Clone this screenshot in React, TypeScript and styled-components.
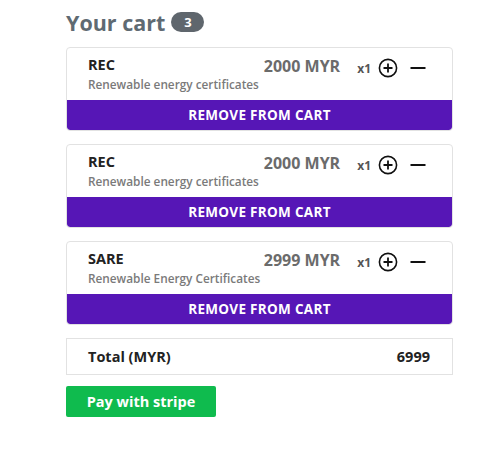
import styled, { createGlobalStyle } from 'styled-components';

const GlobalStyle = createGlobalStyle`
  body {
    margin: 0;
    background: #fff;
    font-family: "Open Sans", "Noto Sans", sans-serif;
  }
`;

const Page = styled.div`
  width: 387px;
  padding: 9px 0 0 66px;
  display: flex;
  flex-direction: column;
`;

const Heading = styled.h2`
  margin: 0 0 12px;
  display: flex;
  align-items: center;
  gap: 6px;
  font-size: 21.5px;
  font-weight: 700;
  color: #5f6a72;
  height: 26px;
`;

const Badge = styled.span`
  display: inline-flex;
  align-items: center;
  justify-content: center;
  background: #5f666d;
  color: #fff;
  font-size: 13px;
  font-weight: 700;
  width: 33px;
  height: 20px;
  border-radius: 10px;
`;

const List = styled.div`
  display: flex;
  flex-direction: column;
  gap: 13px;
`;

const Card = styled.div`
  border: 1px solid #e2e2e2;
  border-radius: 4px;
  display: flex;
  flex-direction: column;
  overflow: hidden;
`;

const CardBody = styled.div`
  height: 52px;
  display: flex;
  align-items: flex-start;
  padding: 7px 26px 0 21px;
  box-sizing: border-box;
`;

const Info = styled.div`
  flex: 1;
  display: flex;
  flex-direction: column;
`;

const Name = styled.div`
  font-size: 14.5px;
  font-weight: 700;
  color: #222;
  line-height: 19px;
`;

const Desc = styled.div`
  font-size: 11.8px;
  font-weight: 600;
  color: #7a7a7a;
  line-height: 15px;
  margin-top: 3px;
  white-space: nowrap;
`;

const Price = styled.div`
  font-size: 16px;
  font-weight: 700;
  color: #6b6b6b;
  margin-top: 0;
  white-space: nowrap;
`;

const Qty = styled.div`
  display: flex;
  align-items: center;
  margin-left: 17px;
  margin-top: 3px;
`;

const Times = styled.span`
  font-size: 12px;
  font-weight: 700;
  color: #555;
  margin-right: 7px;
`;

const IconButton = styled.button<{ $gap?: number }>`
  border: none;
  background: none;
  padding: 0;
  margin-left: ${(p) => p.$gap ?? 0}px;
  display: flex;
  align-items: center;
  cursor: pointer;
`;

const RemoveButton = styled.button`
  height: 30px;
  border: none;
  background: #5616b6;
  color: #fff;
  font-family: inherit;
  font-size: 13.5px;
  font-weight: 700;
  letter-spacing: 0.3px;
  cursor: pointer;
  border-radius: 0 0 3px 3px;
`;

const TotalBox = styled.div`
  margin-top: 13px;
  height: 37px;
  box-sizing: border-box;
  border: 1px solid #e2e2e2;
  display: flex;
  align-items: center;
  justify-content: space-between;
  padding: 0 22px 0 21px;
  font-size: 14.5px;
  font-weight: 700;
  color: #222;
`;

const PayButton = styled.button`
  margin-top: 11px;
  width: 150px;
  height: 31px;
  border: none;
  border-radius: 2px;
  background: #0fbb4e;
  color: #fff;
  font-family: inherit;
  font-size: 14.5px;
  font-weight: 700;
  cursor: pointer;
`;

const PlusIcon = () => (
  <svg width="20" height="20" viewBox="0 0 20 20">
    <circle cx="10" cy="10" r="8.6" fill="none" stroke="#111" strokeWidth="1.6" />
    <path d="M10 5.5v9M5.5 10h9" stroke="#111" strokeWidth="1.8" />
  </svg>
);

const MinusIcon = () => (
  <svg width="16" height="20" viewBox="0 0 16 20">
    <path d="M0.5 10h15" stroke="#111" strokeWidth="1.8" />
  </svg>
);

interface Item {
  name: string;
  desc: string;
  price: string;
}

const items: Item[] = [
  { name: 'REC', desc: 'Renewable energy certificates', price: '2000 MYR' },
  { name: 'REC', desc: 'Renewable energy certificates', price: '2000 MYR' },
  { name: 'SARE', desc: 'Renewable Energy Certificates', price: '2999 MYR' },
];

export default function App() {
  return (
    <>
      <GlobalStyle />
      <Page>
        <Heading>
          Your cart <Badge>3</Badge>
        </Heading>
        <List>
          {items.map((item, i) => (
            <Card key={i}>
              <CardBody>
                <Info>
                  <Name>{item.name}</Name>
                  <Desc>{item.desc}</Desc>
                </Info>
                <Price>{item.price}</Price>
                <Qty>
                  <Times>x1</Times>
                  <IconButton>
                    <PlusIcon />
                  </IconButton>
                  <IconButton $gap={12}>
                    <MinusIcon />
                  </IconButton>
                </Qty>
              </CardBody>
              <RemoveButton>REMOVE FROM CART</RemoveButton>
            </Card>
          ))}
        </List>
        <TotalBox>
          <span>Total (MYR)</span>
          <span>6999</span>
        </TotalBox>
        <PayButton>Pay with stripe</PayButton>
      </Page>
    </>
  );
}
